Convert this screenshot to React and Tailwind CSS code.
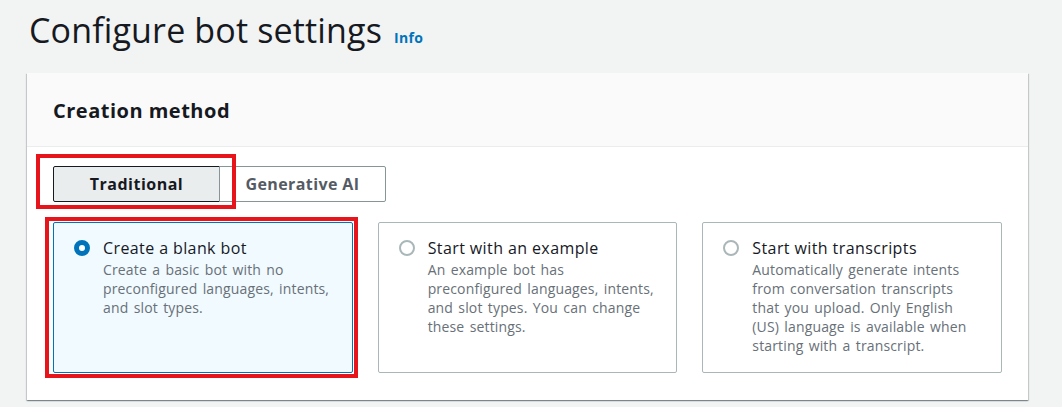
import { useState } from 'react';

const options = [
  {
    id: 'blank',
    title: 'Create a blank bot',
    desc: 'Create a basic bot with no preconfigured languages, intents, and slot types.',
  },
  {
    id: 'example',
    title: 'Start with an example',
    desc: 'An example bot has preconfigured languages, intents, and slot types. You can change these settings.',
  },
  {
    id: 'transcripts',
    title: 'Start with transcripts',
    desc: 'Automatically generate intents from conversation transcripts that you upload. Only English (US) language is available when starting with a transcript.',
  },
];

const Radio = ({ checked }) =>
  checked ? (
    <span className="mt-[3px] h-4 w-4 shrink-0 rounded-full border-[5px] border-[#0073bb] bg-white" />
  ) : (
    <span className="mt-[3px] h-4 w-4 shrink-0 rounded-full border-2 border-[#aab7b8] bg-white" />
  );

export default function App() {
  const [method, setMethod] = useState('traditional');
  const [selected, setSelected] = useState('blank');

  return (
    <div className="min-h-[407px] bg-[#f2f3f3] px-[27px] pt-[6px] font-['Open_Sans',sans-serif] text-[#16191f]">
      {/* Page title */}
      <div className="flex items-baseline gap-3 pl-[2px]">
        <h1 className="text-[34px] leading-[48px] font-normal tracking-[0.15px]">Configure bot settings</h1>
        <a className="text-sm font-bold tracking-[0.3px] text-[#0073bb]">Info</a>
      </div>

      {/* Container */}
      <div className="mt-[19px] mr-[7px] bg-white shadow-[0_1px_1px_0_rgba(0,28,36,0.3),1px_1px_1px_0_rgba(0,28,36,0.15),-1px_1px_1px_0_rgba(0,28,36,0.15)]">
        <div className="border-b border-[#eaeded] bg-[#fafafa] px-[26px] pt-[24px] pb-[21px]">
          <h2 className="text-[20px] leading-7 font-bold tracking-[0.5px]">Creation method</h2>
        </div>

        <div className="px-[26px] pt-[19px] pb-[27px]">
          {/* Segmented control */}
          <div className="relative inline-flex">
            <button
              onClick={() => setMethod('traditional')}
              className={`h-[36px] w-[167px] rounded-l-[2px] border text-base font-bold tracking-[0.5px] ${
                method === 'traditional'
                  ? 'border-[#16191f] bg-[#eaeded] text-[#16191f]'
                  : 'border-[#879596] bg-white text-[#545b64]'
              }`}
            >
              Traditional
            </button>
            <button
              onClick={() => setMethod('generative')}
              className={`-ml-px h-[36px] w-[167px] rounded-r-[2px] border text-base font-bold tracking-[0.4px] ${
                method === 'generative'
                  ? 'border-[#16191f] bg-[#eaeded] text-[#16191f]'
                  : 'border-[#879596] bg-white text-[#545b64]'
              }`}
            >
              Generative AI
            </button>
            <div className="pointer-events-none absolute -top-[12px] -left-[17px] h-[55px] w-[200px] border-4 border-[#e8141b]" />
          </div>

          {/* Options */}
          <div className="mt-[20px] grid grid-cols-3 gap-[25px]">
            {options.map((o) => {
              const checked = selected === o.id;
              return (
                <div key={o.id} className="relative">
                  <button
                    onClick={() => setSelected(o.id)}
                    className={`flex h-[151px] w-full items-start gap-[13px] rounded-[2px] border pr-[21px] pl-[20px] pt-[14px] text-left ${
                      checked ? 'border-[#0073bb] bg-[#f1faff]' : 'border-[#aab7b8] bg-white'
                    }`}
                  >
                    <Radio checked={checked} />
                    <div>
                      <div className="text-base leading-[22px] tracking-[0.4px] text-[#16191f]">{o.title}</div>
                      <div className="mt-px text-sm leading-[19px] tracking-[0.15px] [word-spacing:1.5px] text-[#687078]">{o.desc}</div>
                    </div>
                  </button>
                  {checked && (
                    <div className="pointer-events-none absolute -top-[5px] -left-[8px] -right-[5px] -bottom-[5px] border-4 border-[#e8141b]" />
                  )}
                </div>
              );
            })}
          </div>
        </div>
      </div>
    </div>
  );
}
